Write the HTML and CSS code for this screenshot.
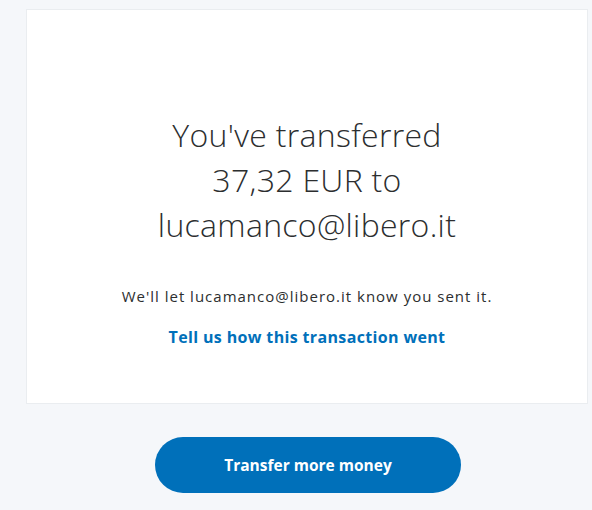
FILE: index.html
```html
<!DOCTYPE html>
<html lang="en">
  <head>
    <meta charset="UTF-8" />
    <meta name="viewport" content="width=device-width, initial-scale=1.0" />
    <title>Transfer complete</title>
    <link rel="stylesheet" href="styles.css">
  </head>
  <body>
    <div class="page">
      <!-- Confirmation card -->
      <div class="card">
        <h1 class="headline">You've transferred<br>37,32 EUR to<br>lucamanco@libero.it</h1>
        <p class="note">We'll let lucamanco@libero.it know you sent it.</p>
        <a class="feedback-link" href="#">Tell us how this transaction went</a>
      </div>

      <!-- Main action -->
      <div class="actions">
        <button class="primary-btn">Transfer more money</button>
      </div>
    </div>
  </body>
</html>
```

FILE: styles.css
```css
/* General body styling */
body {
  margin: 0;
  background-color: #f5f7fa;
  font-family: "Open Sans", "Noto Sans", sans-serif;
  color: #2c2e2f;
}

.page {
  margin-left: 26px;
  width: 562px;
  padding-top: 9px;
}

/* Confirmation card */
.card {
  background: #fff;
  border: 1px solid #eaedf0;
  box-sizing: border-box;
  height: 395px;
  padding-top: 102px;
  text-align: center;
}

.headline {
  margin: 0;
  font-size: 32px;
  font-weight: 300;
  line-height: 45px;
  letter-spacing: 0.3px;
  color: #2c2e2f;
}

.note {
  margin: 38px 0 0;
  font-size: 15px;
  line-height: 22px;
  letter-spacing: 1px;
  color: #2c2e2f;
}

.feedback-link {
  display: inline-block;
  margin-top: 19px;
  font-size: 16px;
  font-weight: 700;
  line-height: 22px;
  letter-spacing: 0.35px;
  color: #0070ba;
  text-decoration: none;
}

/* Button */
.actions {
  display: flex;
  justify-content: center;
  padding-left: 2px;
  margin-top: 33px;
}

.primary-btn {
  width: 306px;
  height: 56px;
  border: none;
  border-radius: 28px;
  background-color: #0070ba;
  color: #fff;
  font-family: "Open Sans", "Noto Sans", sans-serif;
  font-size: 15.5px;
  font-weight: 700;
  cursor: pointer;
}
```
